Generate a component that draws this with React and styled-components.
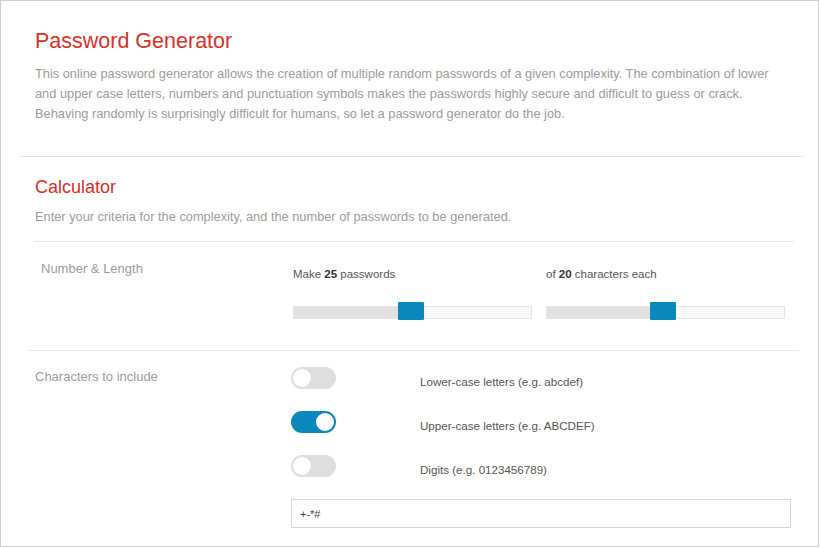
import React from 'react';
import styled, { createGlobalStyle } from 'styled-components';

const GlobalStyle = createGlobalStyle`
  html, body {
    margin: 0;
    padding: 0;
    background: #fff;
  }
  body {
    font-family: 'Liberation Sans', Arial, sans-serif;
  }
`;

const Frame = styled.div`
  box-sizing: border-box;
  width: 819px;
  height: 547px;
  border: 1px solid #cfcfcf;
  background: #fff;
  overflow: hidden;
`;

const Intro = styled.header`
  padding: 27px 35px 0 34px;
`;

const Title = styled.h1`
  margin: 0;
  font-size: 21.5px;
  line-height: 26px;
  font-weight: normal;
  color: #d6312a;
`;

const Lead = styled.p`
  margin: ${(p) => p.$top || 10}px 0 0;
  font-size: 12.8px;
  line-height: 20px;
  color: #9b9b9b;
  max-width: 750px;
`;

const Divider = styled.hr`
  border: 0;
  height: 1px;
  background: #e6e6e6;
  margin: ${(p) => p.$top}px ${(p) => p.$right}px 0 ${(p) => p.$left}px;
`;

const Section = styled.section`
  padding: 19px 0 0 34px;
`;

const SubTitle = styled.h2`
  margin: 0;
  font-size: 18px;
  line-height: 22px;
  font-weight: normal;
  color: #cf2f29;
`;

const FieldRow = styled.div`
  display: grid;
  grid-template-columns: ${(p) => p.$labelWidth}px 1fr;
  padding: ${(p) => p.$top}px 0 0 ${(p) => p.$indent}px;
`;

const FieldLabel = styled.div`
  font-size: 13px;
  line-height: 20px;
  color: #9b9b9b;
`;

const Sliders = styled.div`
  display: grid;
  grid-template-columns: 239px 239px;
  column-gap: 14px;
  padding-top: 7px;
`;

const SliderBox = styled.div`
  display: flex;
  flex-direction: column;
`;

const SmallText = styled.div`
  font-size: 11.5px;
  line-height: 16px;
  color: #555;

  b {
    color: #333;
  }
`;

const Track = styled.div`
  position: relative;
  margin-top: 24px;
  height: 13px;
  box-sizing: border-box;
  border: 1px solid #e4e4e4;
  background: #f8f8f8;
`;

const Fill = styled.div`
  height: 100%;
  background: #e1e1e1;
`;

const Thumb = styled.div`
  position: absolute;
  top: -5px;
  width: 26px;
  height: 18px;
  background: #0a88bb;
  border-radius: 1px;
`;

const Options = styled.div`
  display: flex;
  flex-direction: column;
`;

const OptionRow = styled.div`
  display: grid;
  grid-template-columns: 129px 1fr;
  height: 44px;
`;

const Switch = styled.div`
  position: relative;
  width: 45px;
  height: 22px;
  border-radius: 11px;
  background: ${(p) => (p.$on ? '#0a88bb' : '#dedede')};

  &::after {
    content: '';
    position: absolute;
    top: 2px;
    left: ${(p) => (p.$on ? '25px' : '2px')};
    width: 18px;
    height: 18px;
    border-radius: 50%;
    background: #fff;
  }
`;

const OptionText = styled.div`
  font-size: 11.6px;
  line-height: 16px;
  color: #555;
  padding-top: 7px;
`;

const SymbolsInput = styled.input`
  box-sizing: border-box;
  width: 500px;
  height: 29px;
  border: 1px solid #d4d4d4;
  padding: 0 8px;
  font-family: 'Liberation Sans', Arial, sans-serif;
  font-size: 11px;
  color: #444;
  outline: none;
`;

const Slider = ({ pre, value, post, pct }) => (
  <SliderBox>
    <SmallText>
      {pre} <b>{value}</b> {post}
    </SmallText>
    <Track>
      <Fill style={{ width: `${pct * 213 + 13}px` }} />
      <Thumb style={{ left: `${pct * 213 - 1}px` }} />
    </Track>
  </SliderBox>
);

const options = [
  { label: 'Lower-case letters (e.g. abcdef)', on: false },
  { label: 'Upper-case letters (e.g. ABCDEF)', on: true },
  { label: 'Digits (e.g. 0123456789)', on: false },
];

export default function App() {
  return (
    <>
      <GlobalStyle />
      <Frame>
        <Intro>
          <Title>Password Generator</Title>
          <Lead>
            This online password generator allows the creation of multiple random passwords of a given
            complexity. The combination of lower and upper case letters, numbers and punctuation symbols
            makes the passwords highly secure and difficult to guess or crack. Behaving randomly is
            surprisingly difficult for humans, so let a password generator do the job.
          </Lead>
        </Intro>
        <Divider $top={32} $left={19} $right={15} />
        <Section>
          <SubTitle>Calculator</SubTitle>
          <Lead $top={9}>
            Enter your criteria for the complexity, and the number of passwords to be generated.
          </Lead>
        </Section>
        <Divider $top={14} $left={33} $right={24} />
        <FieldRow $labelWidth={252} $indent={40} $top={17}>
          <FieldLabel>Number &amp; Length</FieldLabel>
          <Sliders>
            <Slider pre="Make" value="25" post="passwords" pct={0.494} />
            <Slider pre="of" value="20" post="characters each" pct={0.489} />
          </Sliders>
        </FieldRow>
        <Divider $top={31} $left={27} $right={19} />
        <FieldRow $labelWidth={256} $indent={34} $top={16}>
          <FieldLabel>Characters to include</FieldLabel>
          <Options>
            {options.map((o) => (
              <OptionRow key={o.label}>
                <Switch $on={o.on} />
                <OptionText>{o.label}</OptionText>
              </OptionRow>
            ))}
            <SymbolsInput defaultValue="+-*#" />
          </Options>
        </FieldRow>
      </Frame>
    </>
  );
}
